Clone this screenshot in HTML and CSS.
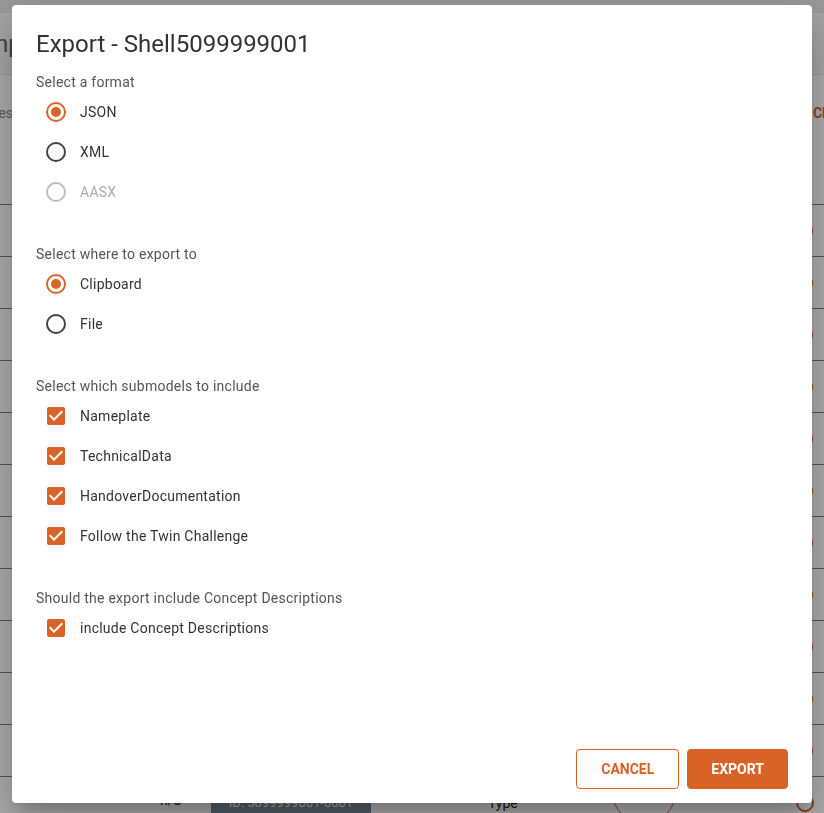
FILE: index.html
```html
<!DOCTYPE html>
<html lang="en">
<head>
<meta charset="utf-8">
<title>Export - Shell5099999001</title>
<link rel="stylesheet" href="styles.css">
</head>
<body>
<div class="page">
  <div class="topbar"></div>
  <div class="header"><span class="page-title">Components</span></div>
  <div class="toolbar">
    <span class="col-head">Entries</span>
    <span class="create">CREATE</span>
  </div>
  <div class="table-head"></div>
  <div class="table">
    <div class="row"><span class="ring"></span></div>
    <div class="row"><span class="ring"></span></div>
    <div class="row"><span class="ring"></span></div>
    <div class="row"><span class="ring"></span></div>
    <div class="row"><span class="ring"></span></div>
    <div class="row"><span class="ring"></span></div>
    <div class="row"><span class="ring"></span></div>
    <div class="row"><span class="ring"></span></div>
    <div class="row"><span class="ring"></span></div>
    <div class="row"><span class="ring"></span></div>
    <div class="row"><span class="ring"></span></div>
    <div class="row last">
      <span class="cell-na">n/a</span>
      <span class="chip">ID: 5099999001-0001</span>
      <span class="cell-type">Type</span>
      <span class="round-btn"></span>
      <span class="ring"></span>
    </div>
  </div>
</div>

<div class="scrim"></div>

<div class="dialog">
  <h1 class="dialog-title">Export - Shell5099999001</h1>

  <div class="section first">
    <div class="section-label">Select a format</div>
    <div class="option">
      <span class="control"><svg viewBox="0 0 24 24" class="icon on"><path d="M12,20A8,8 0 0,1 4,12A8,8 0 0,1 12,4A8,8 0 0,1 20,12A8,8 0 0,1 12,20M12,2A10,10 0 0,0 2,12A10,10 0 0,0 12,22A10,10 0 0,0 22,12A10,10 0 0,0 12,2M12,7A5,5 0 0,0 7,12A5,5 0 0,0 12,17A5,5 0 0,0 17,12A5,5 0 0,0 12,7Z"/></svg></span>
      <span class="option-label">JSON</span>
    </div>
    <div class="option">
      <span class="control"><svg viewBox="0 0 24 24" class="icon off"><path d="M12,20A8,8 0 0,1 4,12A8,8 0 0,1 12,4A8,8 0 0,1 20,12A8,8 0 0,1 12,20M12,2A10,10 0 0,0 2,12A10,10 0 0,0 12,22A10,10 0 0,0 22,12A10,10 0 0,0 12,2Z"/></svg></span>
      <span class="option-label">XML</span>
    </div>
    <div class="option disabled">
      <span class="control"><svg viewBox="0 0 24 24" class="icon dis"><path d="M12,20A8,8 0 0,1 4,12A8,8 0 0,1 12,4A8,8 0 0,1 20,12A8,8 0 0,1 12,20M12,2A10,10 0 0,0 2,12A10,10 0 0,0 12,22A10,10 0 0,0 22,12A10,10 0 0,0 12,2Z"/></svg></span>
      <span class="option-label">AASX</span>
    </div>
  </div>

  <div class="section">
    <div class="section-label">Select where to export to</div>
    <div class="option">
      <span class="control"><svg viewBox="0 0 24 24" class="icon on"><path d="M12,20A8,8 0 0,1 4,12A8,8 0 0,1 12,4A8,8 0 0,1 20,12A8,8 0 0,1 12,20M12,2A10,10 0 0,0 2,12A10,10 0 0,0 12,22A10,10 0 0,0 22,12A10,10 0 0,0 12,2M12,7A5,5 0 0,0 7,12A5,5 0 0,0 12,17A5,5 0 0,0 17,12A5,5 0 0,0 12,7Z"/></svg></span>
      <span class="option-label">Clipboard</span>
    </div>
    <div class="option">
      <span class="control"><svg viewBox="0 0 24 24" class="icon off"><path d="M12,20A8,8 0 0,1 4,12A8,8 0 0,1 12,4A8,8 0 0,1 20,12A8,8 0 0,1 12,20M12,2A10,10 0 0,0 2,12A10,10 0 0,0 12,22A10,10 0 0,0 22,12A10,10 0 0,0 12,2Z"/></svg></span>
      <span class="option-label">File</span>
    </div>
  </div>

  <div class="section">
    <div class="section-label">Select which submodels to include</div>
    <div class="option">
      <span class="control"><svg viewBox="0 0 24 24" class="icon on"><path d="M10,17L5,12L6.41,10.58L10,14.17L17.59,6.58L19,8M19,3H5C3.89,3 3,3.89 3,5V19A2,2 0 0,0 5,21H19A2,2 0 0,0 21,19V5C21,3.89 20.1,3 19,3Z"/></svg></span>
      <span class="option-label">Nameplate</span>
    </div>
    <div class="option">
      <span class="control"><svg viewBox="0 0 24 24" class="icon on"><path d="M10,17L5,12L6.41,10.58L10,14.17L17.59,6.58L19,8M19,3H5C3.89,3 3,3.89 3,5V19A2,2 0 0,0 5,21H19A2,2 0 0,0 21,19V5C21,3.89 20.1,3 19,3Z"/></svg></span>
      <span class="option-label">TechnicalData</span>
    </div>
    <div class="option">
      <span class="control"><svg viewBox="0 0 24 24" class="icon on"><path d="M10,17L5,12L6.41,10.58L10,14.17L17.59,6.58L19,8M19,3H5C3.89,3 3,3.89 3,5V19A2,2 0 0,0 5,21H19A2,2 0 0,0 21,19V5C21,3.89 20.1,3 19,3Z"/></svg></span>
      <span class="option-label">HandoverDocumentation</span>
    </div>
    <div class="option">
      <span class="control"><svg viewBox="0 0 24 24" class="icon on"><path d="M10,17L5,12L6.41,10.58L10,14.17L17.59,6.58L19,8M19,3H5C3.89,3 3,3.89 3,5V19A2,2 0 0,0 5,21H19A2,2 0 0,0 21,19V5C21,3.89 20.1,3 19,3Z"/></svg></span>
      <span class="option-label">Follow the Twin Challenge</span>
    </div>
  </div>

  <div class="section">
    <div class="section-label">Should the export include Concept Descriptions</div>
    <div class="option">
      <span class="control"><svg viewBox="0 0 24 24" class="icon on"><path d="M10,17L5,12L6.41,10.58L10,14.17L17.59,6.58L19,8M19,3H5C3.89,3 3,3.89 3,5V19A2,2 0 0,0 5,21H19A2,2 0 0,0 21,19V5C21,3.89 20.1,3 19,3Z"/></svg></span>
      <span class="option-label">include Concept Descriptions</span>
    </div>
  </div>

  <div class="actions">
    <button class="btn btn-outline">CANCEL</button>
    <button class="btn btn-filled">EXPORT</button>
  </div>
</div>
</body>
</html>
```

FILE: styles.css
```css
* { box-sizing: border-box; }

html, body {
  margin: 0;
  padding: 0;
  height: 100%;
  overflow: hidden;
}

body {
  font-family: Roboto, "Noto Sans", "Liberation Sans", sans-serif;
  background: #ffffff;
  color: #212121;
}

/* ---------- background page ---------- */
.page {
  width: 824px;
  overflow: hidden;
}

.topbar {
  height: 13px;
  background: #e2e2e2;
}

.header {
  height: 62px;
  background: #f5f5f5;
  border-bottom: 1px solid #e0e0e0;
  display: flex;
  align-items: center;
  overflow: hidden;
}

.page-title {
  font-size: 24px;
  color: #5f6368;
  margin-left: -42px;
  white-space: nowrap;
}

.toolbar {
  height: 75px;
  display: flex;
  align-items: center;
  justify-content: space-between;
  overflow: hidden;
}

.col-head {
  font-size: 14px;
  color: #8a8a8a;
  margin-left: -30px;
  white-space: nowrap;
}

.create {
  font-size: 14px;
  font-weight: 700;
  color: #d96227;
  margin-right: -40px;
  white-space: nowrap;
}

.table-head {
  height: 54px;
}

.row {
  height: 52px;
  border-top: 1px solid #7f7f7f;
  display: flex;
  align-items: center;
  justify-content: flex-end;
  padding-right: 11px;
}

.ring {
  width: 18px;
  height: 18px;
  border: 2px solid #d96227;
  border-radius: 50%;
  flex: none;
}

.row.last {
  justify-content: flex-start;
  padding-right: 0;
}

.cell-na {
  font-size: 14px;
  line-height: 20px;
  color: #222;
  margin-left: 160px;
  margin-bottom: 6px;
  width: 51px;
}

.chip {
  width: 160px;
  height: 34px;
  background: #788c96;
  color: #fff;
  font-size: 13px;
  display: flex;
  align-items: center;
  justify-content: center;
  white-space: nowrap;
}

.cell-type {
  font-size: 14px;
  line-height: 20px;
  color: #222;
  margin-left: 117px;
  width: 124px;
}

.round-btn {
  width: 64px;
  height: 64px;
  border: 1.5px solid #c4683a;
  border-radius: 50%;
  flex: none;
  margin-top: -22px;
}

.row.last .ring {
  margin-left: 120px;
}

/* ---------- scrim ---------- */
.scrim {
  position: fixed;
  inset: 0;
  background: rgba(0, 0, 0, 0.32);
}

/* ---------- dialog ---------- */
.dialog {
  position: fixed;
  left: 12px;
  top: 5px;
  width: 800px;
  height: 798px;
  background: #ffffff;
  border-radius: 4px;
  box-shadow: 0 11px 15px -7px rgba(0,0,0,0.2), 0 24px 38px 3px rgba(0,0,0,0.14), 0 9px 46px 8px rgba(0,0,0,0.12);
  display: flex;
  flex-direction: column;
  padding: 23px 24px 14px 24px;
}

.dialog-title {
  margin: 0;
  font-size: 24px;
  font-weight: 400;
  line-height: 32px;
  color: #333333;
}

.section {
  margin-top: 32px;
}

.section.first {
  margin-top: 12px;
}

.section-label {
  font-size: 14px;
  line-height: 20px;
  letter-spacing: 0.0178em;
  color: #555555;
}

.option {
  height: 40px;
  display: flex;
  align-items: center;
}

.control {
  width: 40px;
  height: 40px;
  display: flex;
  align-items: center;
  justify-content: center;
  flex: none;
}

.icon {
  width: 24px;
  height: 24px;
  display: block;
}

.icon.on { fill: #d96227; }
.icon.off { fill: #3e4249; }
.icon.dis { fill: #bdbdbd; }

.option-label {
  padding-left: 4px;
  font-size: 14px;
  line-height: 20px;
  letter-spacing: 0.0178em;
  color: #333333;
}

.option.disabled .option-label {
  color: #ababab;
}

.actions {
  margin-top: auto;
  display: flex;
  justify-content: flex-end;
  gap: 8px;
}

.btn {
  height: 40px;
  padding: 0 24px;
  border-radius: 4px;
  font-family: Roboto, "Noto Sans", "Liberation Sans", sans-serif;
  font-size: 14px;
  font-weight: 700;
  letter-spacing: 0;
  cursor: pointer;
}

.btn-outline {
  background: #ffffff;
  color: #d96227;
  border: 1px solid #d96227;
}

.btn-filled {
  background: #d96227;
  color: #ffffff;
  border: 1px solid #d96227;
  padding: 0 23px;
}
```
